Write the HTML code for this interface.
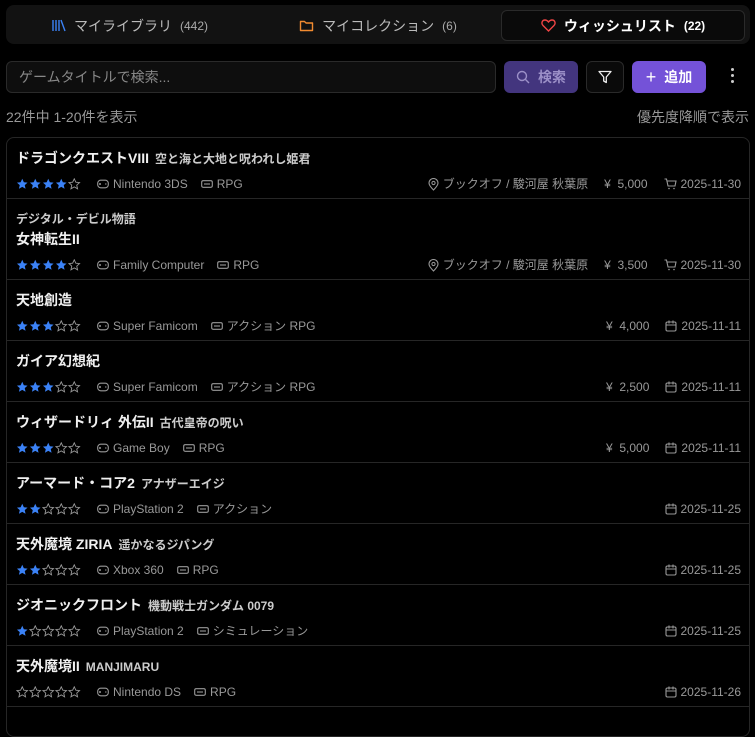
<!DOCTYPE html>
<html><head><meta charset="utf-8"><style>
*{box-sizing:border-box;margin:0;padding:0}
body{width:755px;height:692px;overflow:hidden;background:#000;color:#e8e8e8;font-family:"Liberation Sans","Noto Sans CJK JP",sans-serif;position:relative}
.tabs{position:absolute;left:6px;top:5px;width:744px;height:39px;background:#121212;border-radius:8px}
.tab{position:absolute;top:5px;height:31px;display:flex;align-items:center;justify-content:center;font-size:14px;color:#bbb;gap:8px}
.tab small{font-size:12px;color:#aaa}
.tab.act{background:#0a0a0a;border:1px solid #2a2a2a;border-radius:6px;color:#fff;font-weight:bold}
.tab.act small{color:#fff;font-weight:bold}
.input{position:absolute;left:6px;top:61px;width:490px;height:32px;border:1px solid #2a2a2a;border-radius:6px;background:#0e0e0e;color:#888;font-size:14px;padding-left:12px;line-height:30px}
.btn{position:absolute;top:61px;height:32px;border-radius:6px;display:flex;align-items:center;justify-content:center;gap:8px;font-size:14px;font-weight:bold}
.info{position:absolute;top:107px;font-size:14px;color:#999}
.list{position:absolute;left:6px;top:137px;width:744px;height:600px;border:1px solid #262626;border-radius:8px}
.row{border-bottom:1px solid #262626;padding:10px 8px 0 9px;height:61px;position:relative}
.row.two{height:81px}
.t{font-size:14px;font-weight:bold;color:#f0f0f0;line-height:20px;height:20px;white-space:nowrap}
.t span{font-size:12px;color:#ccc;margin-left:6px}
.sub{font-size:12px;color:#ccc;font-weight:bold;line-height:20px;height:20px}
.m{display:flex;align-items:center;height:16px;line-height:16px;margin-top:8px;font-size:12px;color:#999;white-space:nowrap;overflow:visible}
.st{display:flex;width:68px;height:16px;align-items:center}
.st svg{margin-right:0.5px}
.ic{display:inline-block;vertical-align:middle;margin-right:4px}
.gi{margin-left:13px;display:flex;align-items:center}
.r{position:absolute;right:8px;display:flex;align-items:center}
.r>span{margin-left:16px;display:flex;align-items:center}
</style></head><body>
<div class="tabs">
<div class="tab" style="left:0;width:248px"><svg width="14" height="13" viewBox="0 0 14 13"><g stroke="#3b82f6" stroke-width="1.4" fill="none"><path d="M1 1v11M4 1v11M7 1v11M9 1l4 11"/></g></svg>マイライブラリ<small>(442)</small></div>
<div class="tab" style="left:248px;width:248px"><svg width="15" height="13" viewBox="0 0 15 13"><path d="M1.5 2.5h4l1.5 1.5h6.5v7.5h-12z" stroke="#f28b30" stroke-width="1.4" fill="none" stroke-linejoin="round"/></svg>マイコレクション<small>(6)</small></div>
<div class="tab act" style="left:495px;width:244px"><svg width="15" height="13" viewBox="0 0 15 13"><path d="M7.5 12L2 6.5C0 4.5 1 1 4 1c1.6 0 2.7 1 3.5 2 .8-1 1.9-2 3.5-2 3 0 4 3.5 2 5.5z" stroke="#ef4444" stroke-width="1.4" fill="none"/></svg>ウィッシュリスト<small>(22)</small></div>
</div>
<div class="input">ゲームタイトルで検索...</div>
<div class="btn" style="left:504px;width:74px;background:#43357e;color:#9c90c8"><svg width="14" height="14" viewBox="0 0 14 14"><circle cx="6" cy="6" r="4.5" stroke="#9c90c8" stroke-width="1.4" fill="none"/><path d="M9.5 9.5L13 13" stroke="#9c90c8" stroke-width="1.4"/></svg>検索</div>
<div class="btn" style="left:586px;width:38px;border:1px solid #2a2a2a;background:#0a0a0a"><svg width="14" height="14" viewBox="0 0 14 14"><path d="M1 1.5h12L8.3 7v5.5L5.7 11V7z" stroke="#eee" stroke-width="1.3" fill="none" stroke-linejoin="round"/></svg></div>
<div class="btn" style="left:632px;width:74px;background:#7452d8;color:#fff"><span style="font-size:18px;font-weight:normal">+</span>追加</div>
<div style="position:absolute;left:731px;top:68px;width:3px"><div style="width:3px;height:3px;background:#ccc;border-radius:2px;margin-bottom:3px"></div><div style="width:3px;height:3px;background:#ccc;border-radius:2px;margin-bottom:3px"></div><div style="width:3px;height:3px;background:#ccc;border-radius:2px"></div></div>
<div class="info" style="left:6px">22件中 1-20件を表示</div>
<div class="info" style="right:6px">優先度降順で表示</div>
<div class="list" id="L"></div>
<script>
var SP="M6 0.8l1.6 3.4 3.7.4-2.8 2.5.8 3.7L6 8.9 2.7 10.8l.8-3.7L.7 4.6l3.7-.4z";
var sf='<svg width="12.5" height="12" viewBox="0 0 12 12"><path d="'+SP+'" fill="#3b82f6"/></svg>';
var se='<svg width="12.5" height="12" viewBox="0 0 12 12"><path d="'+SP+'" fill="none" stroke="#999" stroke-width="0.9"/></svg>';
var pad='<svg class="ic" width="12" height="10" viewBox="0 0 12 10"><rect x="0.7" y="1.2" width="10.6" height="7.6" rx="3" stroke="#999" stroke-width="1.1" fill="none"/><path d="M3 4v2M2 5h2M8 5h1.5" stroke="#999" stroke-width="1"/></svg>';
var tag='<svg class="ic" width="12" height="10" viewBox="0 0 12 10"><rect x="0.7" y="1.7" width="10.6" height="6.6" rx="1.5" stroke="#999" stroke-width="1.1" fill="none"/><path d="M3 5h6" stroke="#999" stroke-width="1.1"/></svg>';
var pin='<svg class="ic" width="11" height="13" viewBox="0 0 11 13"><path d="M5.5 12S1 7.5 1 5a4.5 4.5 0 0 1 9 0c0 2.5-4.5 7-4.5 7z" stroke="#999" stroke-width="1.1" fill="none"/><circle cx="5.5" cy="5" r="1.6" stroke="#999" fill="none"/></svg>';
var cart='<svg class="ic" width="13" height="12" viewBox="0 0 13 12"><path d="M0.5 1h2l1.5 7h7l1-5H3" stroke="#999" stroke-width="1.1" fill="none"/><circle cx="5" cy="10.5" r=".8" fill="#999"/><circle cx="10" cy="10.5" r=".8" fill="#999"/></svg>';
var cal='<svg class="ic" width="12" height="12" viewBox="0 0 12 12"><rect x="1" y="2" width="10" height="9" rx="1.5" stroke="#999" stroke-width="1.1" fill="none"/><path d="M1 5h10M4 0.5v3M8 0.5v3" stroke="#999" stroke-width="1.1"/></svg>';
var D=[
["ドラゴンクエストVIII","空と海と大地と呪われし姫君","",4,"Nintendo 3DS","RPG","ブックオフ / 駿河屋 秋葉原","5,000",1,"2025-11-30"],
["女神転生II","","デジタル・デビル物語",4,"Family Computer","RPG","ブックオフ / 駿河屋 秋葉原","3,500",1,"2025-11-30"],
["天地創造","","",3,"Super Famicom","アクション RPG","","4,000",0,"2025-11-11"],
["ガイア幻想紀","","",3,"Super Famicom","アクション RPG","","2,500",0,"2025-11-11"],
["ウィザードリィ 外伝II","古代皇帝の呪い","",3,"Game Boy","RPG","","5,000",0,"2025-11-11"],
["アーマード・コア2","アナザーエイジ","",2,"PlayStation 2","アクション","","",0,"2025-11-25"],
["天外魔境 ZIRIA","遥かなるジパング","",2,"Xbox 360","RPG","","",0,"2025-11-25"],
["ジオニックフロント","機動戦士ガンダム 0079","",1,"PlayStation 2","シミュレーション","","",0,"2025-11-25"],
["天外魔境II","MANJIMARU","",0,"Nintendo DS","RPG","","",0,"2025-11-26"]];
var h='';
D.forEach(function(d){
 var s='';for(var i=0;i<5;i++)s+=i<d[3]?sf:se;
 var r='';
 if(d[6])r+='<span>'+pin+d[6]+'</span>';
 if(d[7])r+='<span>¥&nbsp;&nbsp;'+d[7]+'</span>';
 r+='<span>'+(d[8]?cart:cal)+d[9]+'</span>';
 h+='<div class="row'+(d[2]?' two':'')+'">'+(d[2]?'<div class="sub">'+d[2]+'</div>':'')+
 '<div class="t">'+d[0]+(d[1]?'<span>'+d[1]+'</span>':'')+'</div>'+
 '<div class="m"><span class="st">'+s+'</span><span class="gi">'+pad+d[4]+'</span><span class="gi">'+tag+d[5]+'</span><div class="r">'+r+'</div></div></div>';
});
document.getElementById('L').innerHTML=h;
</script>
</body></html>
